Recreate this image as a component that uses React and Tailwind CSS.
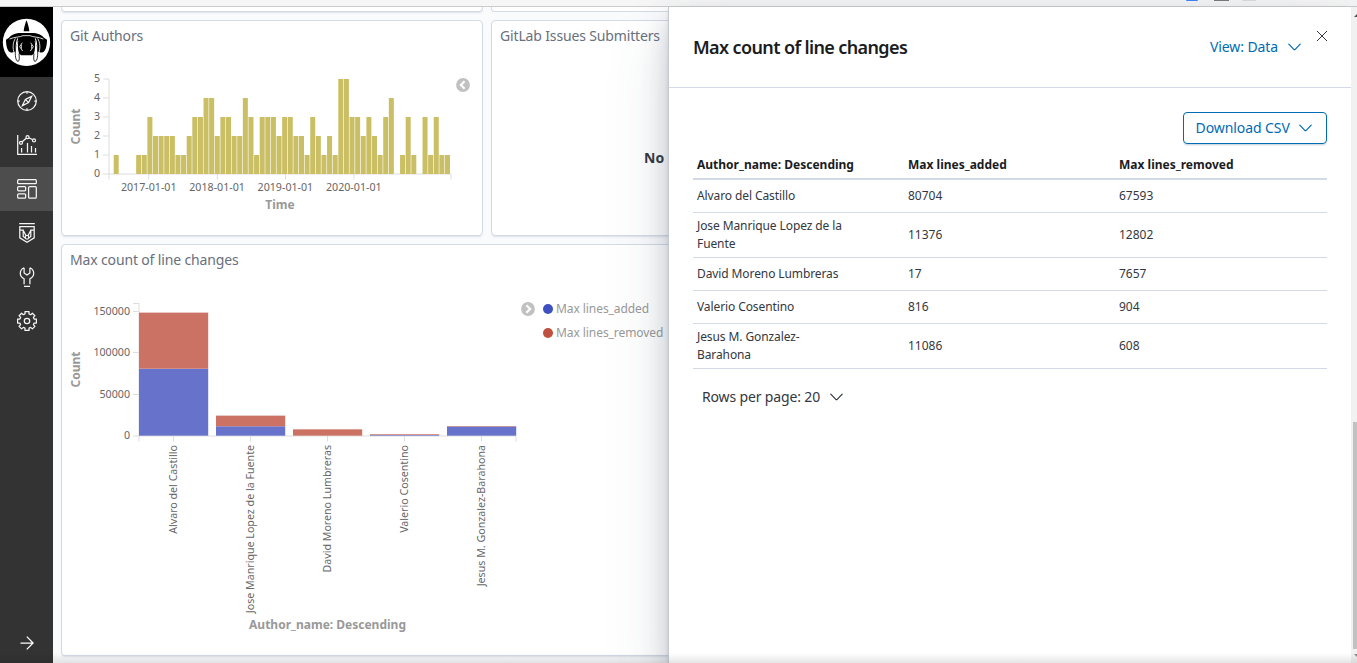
import React from "react";

const HIST = [
  1, 0, 0, 0, 1, 1, 3, 2, 2, 2, 2, 1, 1, 2, 3, 3, 4, 4, 2, 3, 3, 2, 2, 4, 3, 1, 3, 3, 3, 2,
  3, 3, 2, 2, 1, 3, 2, 1, 2, 1, 5, 5, 3, 3, 2, 3, 2, 1, 3, 4, 0, 1, 3, 1, 0, 3, 1, 3, 1, 1,
];

const AUTHORS = [
  { name: "Alvaro del Castillo", added: 80704, removed: 67593 },
  { name: "Jose Manrique Lopez de la Fuente", added: 11376, removed: 12802 },
  { name: "David Moreno Lumbreras", added: 17, removed: 7657 },
  { name: "Valerio Cosentino", added: 816, removed: 904 },
  { name: "Jesus M. Gonzalez-Barahona", added: 11086, removed: 608 },
];

function Logo() {
  return (
    <svg width="49" height="49" viewBox="7 53 147 147" className="block">
      <circle cx="80.500" cy="126" r="71" fill="#fff" />
      <path d="M80.500 60 C84 68 88 82 89 93 L72 93 C73 82 77 68 80.500 60Z" fill="#000" />
      <path d="M68 98 H93 C111 97 126 103 133 112 L142 118 C142 134 139 148 132 154 C125 158 118 157 113 153 L107 122 H54 L48 153 C43 157 36 158 29 154 C22 148 19 134 19 118 L28 112 C35 103 50 97 68 98Z" fill="#000" />
      <path d="M56 120 H105 C107 133 107 148 103 159 L97 165 H64 L58 159 C54 148 54 133 56 120Z" fill="#000" />
      <g fill="none" stroke="#fff" strokeWidth="2.500">
        <path d="M30 116 C46 109 60 111 70 106 H91 C101 111 115 109 131 116" />
        <path d="M47 114 C40 126 38 142 44 160 M114 114 C121 126 123 142 117 160" strokeWidth="2.500" />
        <path d="M54 114 C49 128 48 144 52 158 M107 114 C112 128 113 144 109 158" strokeWidth="3" />
        <path d="M68 127 L60 139 L69 152 M65 133 V145 M93 127 L101 139 L92 152 M96 133 V145" />
      </g>
      <path d="M47 152 C46 172 50 184 56 183 C60 179 59 170 58 160 M114 152 C115 172 111 184 105 183 C101 179 102 170 103 160" fill="none" stroke="#000" strokeWidth="2.500" />
    </svg>
  );
}

function NavIcon({ children }) {
  return (
    <svg width="20" height="20" viewBox="0 0 20 20" fill="none" stroke="#f5f5f5" strokeWidth="1.250">
      {children}
    </svg>
  );
}

const gearPath =
  "M8 .7h4v2.200l1.700.8 1.700-1.500 2.500 2.500-1.500 1.700.7 1.600h2.300v4h-2.300l-.7 1.700 1.500 1.700-2.500 2.500-1.700-1.500-1.700.7v2.300H8v-2.300l-1.700-.7-1.700 1.500-2.500-2.500 1.500-1.700-.7-1.700H.6V8h2.300l.7-1.600-1.500-1.700 2.500-2.500 1.700 1.500L8 2.900z";

const NAV = [
  <NavIcon key="discover">
    <circle cx="10" cy="10" r="9.300" />
    <path d="M14.600 5.400 11.600 11.600 5.400 14.600 8.400 8.400Z M8.400 8.400l3.200 3.200M10 .7v2M10 17.300v2M.7 10h2M17.300 10h2" />
  </NavIcon>,
  <NavIcon key="visualize">
    <path d="M.7 0V19.300H20M4.600 13v4.500M10.500 8v9.500M14.500 11v6.500M18.500 13v4.500M5.200 6.800l4-3.600M11.900 2.800l3.800 2" />
    <circle cx="4" cy="7.800" r="1.500" />
    <circle cx="10.500" cy="2.200" r="1.500" />
    <circle cx="17" cy="5.400" r="1.500" />
  </NavIcon>,
  <NavIcon key="dashboard">
    <rect x=".65" y=".65" width="18.700" height="4" rx="1" />
    <rect x=".65" y="7.600" width="8" height="4.200" rx="1" />
    <rect x=".65" y="14.800" width="8" height="4.400" rx="1" />
    <rect x="11.600" y="7.600" width="7.700" height="11.600" rx="1" />
  </NavIcon>,
  <NavIcon key="timelion">
    <path d="M2.200 .7h15.600M2.800 3.200V14.800L10 19.200l7.200-4.400V3.200M2.200 3.700h15.600M2.800 7.200h3.400v6.300L8.300 15M17.200 7.200h-3.400v6.300L11.700 15M6.200 7.200l2.700 5.300M13.800 7.200l-2.700 5.300" />
    <circle cx="10" cy="14.200" r="1.800" />
  </NavIcon>,
  <NavIcon key="devtools">
    <path d="M7.100 .7C4.800 1.700 3.300 3.800 3.300 6.300c0 2.500 1.400 4.400 3.800 5.500v5.400M12.900 .7c2.300 1 3.800 3.100 3.800 5.600 0 2.500-1.400 4.400-3.800 5.500v5.400M7.100 .7v5.200L10 8l2.900-2.100V.7M7 19.300h6" />
  </NavIcon>,
  <NavIcon key="management">
    <path d={gearPath} strokeLinejoin="round" />
    <circle cx="10" cy="10" r="2.700" />
  </NavIcon>,
];

function Sidebar() {
  return (
    <nav className="flex w-[53px] shrink-0 flex-col bg-[#333]">
      <div className="mb-0.5 flex h-[70px] items-center justify-center bg-black">
        <Logo />
      </div>
      {NAV.map((icon, i) => (
        <div
          key={i}
          className={i === 2 ? "flex h-11 items-center justify-center bg-[#4d4d4d]" : "flex h-11 items-center justify-center"}
        >
          {icon}
        </div>
      ))}
      <div className="mt-auto flex h-10 items-center justify-center">
        <svg width="14" height="14" viewBox="0 0 14 14" fill="none" stroke="#fff" strokeWidth="1.250">
          <path d="M.5 7h12.500M6.800 .6 13.100 7l-6.300 6.400" />
        </svg>
      </div>
    </nav>
  );
}

function Chevron({ className }) {
  return (
    <svg width="13" height="8" viewBox="0 0 13 8" fill="none" stroke="currentColor" strokeWidth="1.200" strokeLinecap="round" strokeLinejoin="round" className={className}>
      <path d="M.8 1.200 5.800 6.300Q6.500 7 7.200 6.300L12.200 1.200" />
    </svg>
  );
}

function CircleArrow({ left }) {
  return (
    <svg width="14" height="14" viewBox="0 0 14 14">
      <circle cx="7" cy="7" r="6.900" fill="#c1c1c1" />
      <path d={left ? "M8.600 3.300 4.900 7l3.700 3.700" : "M5.400 3.300 9.100 7l-3.700 3.700"} fill="none" stroke="#fff" strokeWidth="2.200" />
    </svg>
  );
}

function Panel({ className, title, children }) {
  return (
    <section className={`shrink-0 rounded border border-[#d3dae6] bg-white shadow-[0_2px_2px_-1px_rgba(152,162,179,0.3)] ${className}`}>
      <h2 className="h-[30px] pl-2 pt-[5px] text-[14px] leading-[20px] tracking-[-0.15px] text-[#69707d]">{title}</h2>
      {children}
    </section>
  );
}

/* Both charts use the page's own pixel grid as their view box. */
function GitAuthorsChart() {
  return (
    <svg width="390" height="170" viewBox="62 51 390 170" className="shrink-0" fontSize="10.670" fill="#666">
      <path d="M103.500 79H109V174H451" fill="none" stroke="#ddd" />
      <path d="M103 98h6M103 117h6M103 136h6M103 155h6M103 174h6M109 174v5.500M148.700 174v5.500M217.300 174v5.500M285.500 174v5.500M354 174v5.500M451 174v5.500" stroke="#ddd" />
      {HIST.map((v, i) => (
        <rect key={i} x={113.700 + i * 5.615} y={174 - v * 19} width="5" height={v * 19} fill="#cabf65" />
      ))}
      {[0, 1, 2, 3, 4, 5].map((v) => (
        <text key={v} x="100" y={177 - v * 19} textAnchor="end">{v}</text>
      ))}
      {[148.700, 217.100, 285.400, 353.800].map((x, i) => (
        <text key={x} x={x} y="191" textAnchor="middle">{`${2017 + i}-01-01`}</text>
      ))}
      <text x="280" y="209" textAnchor="middle" fontSize="12" fontWeight="700" fill="#999">Time</text>
      <text transform="translate(80 126.500) rotate(-90)" textAnchor="middle" fontSize="12" fontWeight="700" fill="#999">Count</text>
    </svg>
  );
}

function LineChangesChart() {
  const k = 41.500 / 50000;
  return (
    <svg width="459" height="370" viewBox="62 275 459 370" className="shrink-0" fontSize="10.670" fill="#666">
      <path d="M133 303.500H139V436H516" fill="none" stroke="#ddd" />
      <path d="M133 311.500h6M133 352.500h6M133 394.500h6M133 436h6M139 436v5.500M516 436v5.500M173.500 436v5.500M250.500 436v5.500M327.500 436v5.500M404.500 436v5.500M481.500 436v5.500" stroke="#ddd" />
      {AUTHORS.map((a, i) => {
        const x = 139 + i * 77;
        const top = 435.700 - a.added * k;
        return (
          <g key={a.name}>
            <rect x={x} y={top} width="69.200" height={a.added * k} fill="#6772cb" />
            <rect x={x} y={top - a.removed * k} width="69.200" height={a.removed * k} fill="#cb7265" />
            <text transform={`translate(${x + 38} 445) rotate(-90)`} textAnchor="end">{a.name}</text>
          </g>
        );
      })}
      {[0, 50000, 100000, 150000].map((v) => (
        <text key={v} x="130" y={439 - v * k} textAnchor="end">{v}</text>
      ))}
      <text x="327.500" y="629" textAnchor="middle" fontSize="12" fontWeight="700" fill="#999">Author_name: Descending</text>
      <text transform="translate(80 369.500) rotate(-90)" textAnchor="middle" fontSize="12" fontWeight="700" fill="#999">Count</text>
    </svg>
  );
}

function Dashboard() {
  return (
    <main className="flex w-[616px] shrink-0 flex-col overflow-hidden bg-[#fafbfd] pl-2">
      <div className="flex shrink-0 gap-2">
        <div className="h-[5px] w-[422px] shrink-0 rounded-b border border-t-0 border-[#d3dae6] bg-white shadow-[0_2px_2px_-1px_rgba(152,162,179,0.3)]" />
        <div className="h-[5px] w-[422px] shrink-0 rounded-b border border-t-0 border-[#d3dae6] bg-white" />
      </div>
      <div className="mt-2 flex shrink-0 gap-2">
        <Panel className="h-[216px] w-[422px]" title="Git Authors">
          <div className="flex">
            <GitAuthorsChart />
            <div className="pl-[4px] pt-[27px]"><CircleArrow left /></div>
          </div>
        </Panel>
        <Panel className="h-[216px] w-[422px]" title="GitLab Issues Submitters">
          <p className="pl-[152px] pt-[97px] text-[14px] font-bold leading-5 text-[#343741]">No</p>
        </Panel>
      </div>
      <Panel className="mt-2 h-[412px] w-[852px]" title="Max count of line changes">
        <div className="flex">
          <LineChangesChart />
          <div className="pt-[27px]"><CircleArrow /></div>
          <ul className="pl-[8px] pt-[22px] text-[12px] leading-6 tracking-[-0.07px] text-[#999]">
            <li className="flex items-center gap-[3px]">
              <span className="size-[10px] rounded-full bg-[#3f51c1]" />Max lines_added
            </li>
            <li className="flex items-center gap-[3px]">
              <span className="size-[10px] rounded-full bg-[#c0503f]" />Max lines_removed
            </li>
          </ul>
        </div>
      </Panel>
    </main>
  );
}

function Flyout() {
  return (
    <aside className="relative z-10 -ml-px flex flex-1 flex-col border-l border-[#c5c9d1] bg-white shadow-[0_2px_4px_-1px_rgba(65,78,101,0.2),0_12px_24px_rgba(65,78,101,0.25),0_30px_60px_rgba(65,78,101,0.16)]">
      <header className="flex h-[81px] shrink-0 items-start justify-between border-b border-[#d3dae6] pl-6 pr-[24px]">
        <h1 className="pt-[26px] text-[18px] font-semibold leading-7 tracking-[-0.62px] text-[#1a1c21]">Max count of line changes</h1>
        <div className="flex">
          <button className="mt-[30px] flex items-center text-[14px] leading-5 tracking-[-0.1px] text-[#006bb4]">
            View: Data <Chevron className="ml-[10px]" />
          </button>
          <button className="ml-[16px] mt-[24px] h-[10px] text-[#343741]">
            <svg width="10" height="10" viewBox="0 0 10 10" fill="none" stroke="currentColor" strokeWidth="1">
              <path d="M0 0l10 10M10 0L0 10" />
            </svg>
          </button>
        </div>
      </header>
      <div className="flex flex-col px-6 pt-6">
        <button className="flex h-8 w-[144px] items-center self-end rounded border border-[#006bb4] pl-[11.500px] text-[14px] leading-5 tracking-[-0.08px] text-[#006bb4] shadow-[0_2px_2px_-1px_rgba(54,97,126,0.3)]">
          Download CSV <Chevron className="ml-[9.500px]" />
        </button>
        <table className="mt-[5px] w-full table-fixed border-collapse text-left text-[12px] leading-[18px] text-[#343741]">
          <colgroup>
            <col className="w-[211px]" />
            <col className="w-[211px]" />
            <col />
          </colgroup>
          <thead>
            <tr className="h-[30px] border-b-2 border-[#d3dae6] text-[#1a1c21]">
              <th className="px-1 pt-0.5 font-bold">Author_name: Descending</th>
              <th className="px-1 pt-0.5 font-bold">Max lines_added</th>
              <th className="px-1 pt-0.5 font-bold">Max lines_removed</th>
            </tr>
          </thead>
          <tbody>
            {AUTHORS.map((a) => (
              <tr key={a.name} className="h-[33px] border-b border-[#d3dae6]">
                <td className="py-1 pl-1 pr-[52px] tracking-[-0.1px]">{a.name}</td>
                <td className="px-1 py-1">{a.added}</td>
                <td className="px-1 py-1">{a.removed}</td>
              </tr>
            ))}
          </tbody>
        </table>
        <button className="ml-[9px] mt-[18px] flex items-center text-[14px] leading-5 tracking-[-0.15px] text-[#343741]">
          Rows per page: 20 <Chevron className="ml-[9.500px]" />
        </button>
      </div>
    </aside>
  );
}

export default function App() {
  return (
    <div className="relative flex h-[663px] w-[1357px] flex-col overflow-hidden bg-white font-['Noto_Sans',sans-serif]">
      <div className="flex h-[7px] shrink-0 items-start border-b border-[#ccc] bg-[#f6f6f6] pl-[1186px]">
        <span className="h-px w-[12px] rounded-b bg-[#4285f4]" />
        <span className="ml-[16px] h-px w-[15px] bg-[#7a7a7a]" />
        <span className="ml-[13px] h-px w-[14px] rounded-b bg-[#dcdcdc]" />
      </div>
      <div className="flex min-h-0 flex-1">
        <Sidebar />
        <Dashboard />
        <Flyout />
        <div className="relative z-20 flex w-[6px] shrink-0 flex-col items-end bg-[#f1f1f1]">
          <svg width="3" height="3" viewBox="0 0 3 3" className="mt-[7px]"><path d="M3 0v3H0z" fill="#505050" /></svg>
          <div className="mt-[405px] h-[227px] w-1 bg-[#c1c1c1]" />
          <svg width="3" height="3" viewBox="0 0 3 3" className="mt-[5px]"><path d="M0 0h3v3z" fill="#888" /></svg>
        </div>
      </div>
      <div className="pointer-events-none absolute inset-x-0 bottom-0 z-30 h-[10px] bg-gradient-to-b from-transparent to-black/10" />
    </div>
  );
}
